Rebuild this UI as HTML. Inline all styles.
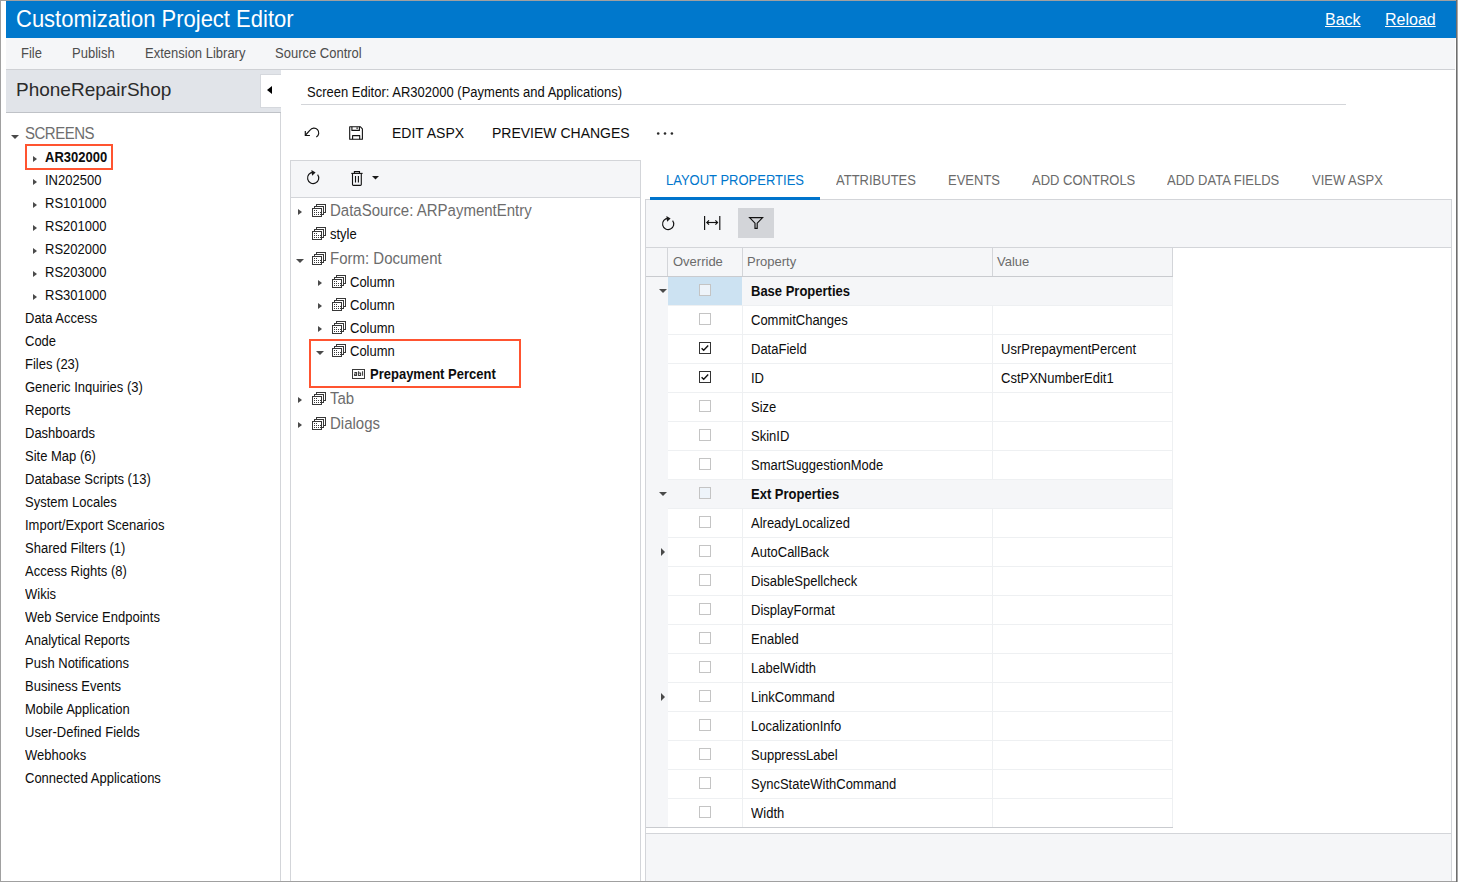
<!DOCTYPE html>
<html><head><meta charset="utf-8">
<style>
html,body{margin:0;padding:0;}
body{width:1458px;height:882px;position:relative;overflow:hidden;background:#fff;font-family:"Liberation Sans",sans-serif;color:#212121;}
.a{position:absolute;}
.t{position:absolute;white-space:nowrap;line-height:1;}
.f13{font-size:13px;transform:scaleY(1.075);transform-origin:0 11px;}
.f14{font-size:14px;}
.f15{font-size:15px;transform:scaleY(1.07);transform-origin:0 13px;}
.b{font-weight:bold;}
.tri-r{position:absolute;width:0;height:0;border-top:3.5px solid transparent;border-bottom:3.5px solid transparent;border-left:4.5px solid #4a4a4a;}
.tri-d{position:absolute;width:0;height:0;border-left:4px solid transparent;border-right:4px solid transparent;border-top:4px solid #4a4a4a;}
.redbox{position:absolute;border:2px solid #ff5430;box-sizing:border-box;}
.cb{position:absolute;width:12px;height:12px;box-sizing:border-box;border:1px solid #c4c4c4;background:#fff;}
</style></head>
<body>
<div class="a" style="left:6px;top:1px;width:1450px;height:37px;background:#0078cc;"></div>
<div class="t " style="left:16px;top:8px;color:#fff;font-size:22px;transform:scaleY(1.066);transform-origin:0 3px">Customization Project Editor</div>
<div class="t " style="left:1325px;top:12px;color:#fff;font-size:16px;text-decoration:underline">Back</div>
<div class="t " style="left:1385px;top:12px;color:#fff;font-size:16px;text-decoration:underline">Reload</div>
<div class="a" style="left:6px;top:38px;width:1449px;height:31px;background:#f5f6f8;"></div>
<div class="a" style="left:6px;top:69px;width:1449px;height:1px;background:#cfd1d5;"></div>
<div class="t f13" style="left:21px;top:47px;color:#4d4d4d;">File</div>
<div class="t f13" style="left:72px;top:47px;color:#4d4d4d;">Publish</div>
<div class="t f13" style="left:145px;top:47px;color:#4d4d4d;">Extension Library</div>
<div class="t f13" style="left:275px;top:47px;color:#4d4d4d;">Source Control</div>
<div class="a" style="left:6px;top:70px;width:275px;height:42px;background:#e1e4e9;"></div>
<div class="a" style="left:6px;top:112px;width:275px;height:1px;background:#bfc2c7;"></div>
<div class="a" style="left:280px;top:113px;width:1px;height:768px;background:#d3d5d9;"></div>
<div class="t " style="left:16px;top:80px;color:#2b2b2b;font-size:19px">PhoneRepairShop</div>
<div class="a" style="left:260px;top:74px;width:21px;height:34px;background:#fff;border-left:1px solid #d5d8dd;border-top:1px solid #d5d8dd;border-bottom:1px solid #d5d8dd;box-sizing:border-box"></div>
<div class="a" style="left:267px;top:86px;width:0;height:0;border-top:4px solid transparent;border-bottom:4px solid transparent;border-right:5px solid #000"></div>
<div class="tri-d" style="left:11px;top:135px"></div>
<div class="t f15" style="left:25px;top:126px;color:#6e6e6e;letter-spacing:-0.5px">SCREENS</div>
<div class="tri-r" style="left:33px;top:156px"></div>
<div class="t f13 b" style="left:45px;top:151px;color:#0d0d0d;">AR302000</div>
<div class="tri-r" style="left:33px;top:179px"></div>
<div class="t f13" style="left:45px;top:174px;color:#0d0d0d;">IN202500</div>
<div class="tri-r" style="left:33px;top:202px"></div>
<div class="t f13" style="left:45px;top:197px;color:#0d0d0d;">RS101000</div>
<div class="tri-r" style="left:33px;top:225px"></div>
<div class="t f13" style="left:45px;top:220px;color:#0d0d0d;">RS201000</div>
<div class="tri-r" style="left:33px;top:248px"></div>
<div class="t f13" style="left:45px;top:243px;color:#0d0d0d;">RS202000</div>
<div class="tri-r" style="left:33px;top:271px"></div>
<div class="t f13" style="left:45px;top:266px;color:#0d0d0d;">RS203000</div>
<div class="tri-r" style="left:33px;top:294px"></div>
<div class="t f13" style="left:45px;top:289px;color:#0d0d0d;">RS301000</div>
<div class="redbox" style="left:25px;top:144px;width:88px;height:26px"></div>
<div class="t f13" style="left:25px;top:312px;color:#0d0d0d;">Data Access</div>
<div class="t f13" style="left:25px;top:335px;color:#0d0d0d;">Code</div>
<div class="t f13" style="left:25px;top:358px;color:#0d0d0d;">Files (23)</div>
<div class="t f13" style="left:25px;top:381px;color:#0d0d0d;">Generic Inquiries (3)</div>
<div class="t f13" style="left:25px;top:404px;color:#0d0d0d;">Reports</div>
<div class="t f13" style="left:25px;top:427px;color:#0d0d0d;">Dashboards</div>
<div class="t f13" style="left:25px;top:450px;color:#0d0d0d;">Site Map (6)</div>
<div class="t f13" style="left:25px;top:473px;color:#0d0d0d;">Database Scripts (13)</div>
<div class="t f13" style="left:25px;top:496px;color:#0d0d0d;">System Locales</div>
<div class="t f13" style="left:25px;top:519px;color:#0d0d0d;">Import/Export Scenarios</div>
<div class="t f13" style="left:25px;top:542px;color:#0d0d0d;">Shared Filters (1)</div>
<div class="t f13" style="left:25px;top:565px;color:#0d0d0d;">Access Rights (8)</div>
<div class="t f13" style="left:25px;top:588px;color:#0d0d0d;">Wikis</div>
<div class="t f13" style="left:25px;top:611px;color:#0d0d0d;">Web Service Endpoints</div>
<div class="t f13" style="left:25px;top:634px;color:#0d0d0d;">Analytical Reports</div>
<div class="t f13" style="left:25px;top:657px;color:#0d0d0d;">Push Notifications</div>
<div class="t f13" style="left:25px;top:680px;color:#0d0d0d;">Business Events</div>
<div class="t f13" style="left:25px;top:703px;color:#0d0d0d;">Mobile Application</div>
<div class="t f13" style="left:25px;top:726px;color:#0d0d0d;">User-Defined Fields</div>
<div class="t f13" style="left:25px;top:749px;color:#0d0d0d;">Webhooks</div>
<div class="t f13" style="left:25px;top:772px;color:#0d0d0d;">Connected Applications</div>
<div class="t f13" style="left:307px;top:86px;color:#0d0d0d;">Screen Editor: AR302000 (Payments and Applications)</div>
<div class="a" style="left:301px;top:104px;width:1045px;height:1px;background:#d3d5d9;"></div>
<svg class="a" style="left:300px;top:120px" width="24" height="24" viewBox="0 0 24 24" fill="none" stroke="#111" stroke-width="1.15">
<path d="M16.3 17.1 A4.8 4.8 0 1 0 10.0 10.2 L5.6 15.0"/><path d="M5.3 11.0 V15.5 H9.9"/></svg>
<svg class="a" style="left:340px;top:120px" width="30" height="24" viewBox="0 0 30 24" fill="none" stroke="#111" stroke-width="1.1" stroke-linejoin="round">
<path d="M9.7 6.7 H20.2 L22.4 8.9 V19.3 H9.7 Z"/><path d="M11.9 6.7 V10.4 H19.4 V6.7"/><path d="M12.6 19.3 V15.6 H19.7 V19.3"/><path d="M17.1 7.3 V8.9" stroke-width="1.1"/></svg>
<div class="t f14" style="left:392px;top:126px;color:#0d0d0d;">EDIT ASPX</div>
<div class="t f14" style="left:492px;top:126px;color:#0d0d0d;">PREVIEW CHANGES</div>
<svg class="a" style="left:652px;top:120px" width="30" height="24" viewBox="0 0 30 24" fill="#2a2a2a"><circle cx="6.2" cy="13.5" r="1.3"/><circle cx="13.0" cy="13.5" r="1.3"/><circle cx="19.9" cy="13.5" r="1.3"/></svg>
<div class="a" style="left:290px;top:160px;width:351px;height:722px;box-sizing:border-box;border-left:1px solid #d3d5d9;border-top:1px solid #d3d5d9;border-right:1px solid #d3d5d9;background:#fff"></div>
<div class="a" style="left:291px;top:161px;width:349px;height:36px;background:#f5f6f8;"></div>
<div class="a" style="left:291px;top:197px;width:349px;height:1px;background:#d3d5d9;"></div>
<svg class="a" style="left:302.9px;top:168.0px" width="20" height="20" viewBox="0 0 20 20" fill="none" stroke="#111" stroke-width="1.15">
<path d="M14.6 6.6 A5.6 5.6 0 1 1 10.2 4.4"/><path d="M8.4 1.9 L12.6 4.5 L9.1 7.7 Z" fill="#1a1a1a" stroke="none"/></svg>
<svg class="a" style="left:345px;top:165px" width="40" height="24" viewBox="0 0 40 24" fill="none" stroke="#111" stroke-width="1.1">
<path d="M6.3 8.4 H17.6"/><path d="M9.4 8.2 V6.6 H14.5 V8.2"/><path d="M7.5 8.4 V19.5 Q7.5 20.4 8.4 20.4 H15.4 Q16.3 20.4 16.3 19.5 V8.4"/><path d="M10.5 11 V17.6 M13.4 11 V17.6"/>
<path d="M27 11 H34 L30.5 14.6 Z" fill="#1a1a1a" stroke="none"/></svg>
<div class="tri-r" style="left:298px;top:209px"></div>
<svg class="a" style="left:311px;top:203px" width="16" height="16" viewBox="0 0 16 16" fill="#fff" stroke="#383838" stroke-width="1" shape-rendering="crispEdges">
<rect x="5.5" y="1.5" width="9" height="8"/><rect x="3.5" y="3.5" width="9" height="8"/><rect x="1.5" y="5.5" width="9" height="8"/>
<g fill="#383838" stroke="none"><rect x="3" y="7" width="1" height="1"/><rect x="5" y="7" width="1" height="1"/>
<rect x="3" y="9" width="1" height="1"/><rect x="5" y="9" width="1" height="1"/><rect x="7" y="9" width="1" height="1"/><rect x="9" y="9" width="1" height="1"/>
<rect x="3" y="11" width="1" height="1"/><rect x="5" y="11" width="1" height="1"/><rect x="7" y="11" width="1" height="1"/><rect x="9" y="11" width="1" height="1"/></g></svg>
<div class="t f15" style="left:330px;top:203px;color:#6c6c6c;">DataSource: ARPaymentEntry</div>
<svg class="a" style="left:311px;top:226px" width="16" height="16" viewBox="0 0 16 16" fill="#fff" stroke="#383838" stroke-width="1" shape-rendering="crispEdges">
<rect x="5.5" y="1.5" width="9" height="8"/><rect x="3.5" y="3.5" width="9" height="8"/><rect x="1.5" y="5.5" width="9" height="8"/>
<g fill="#383838" stroke="none"><rect x="3" y="7" width="1" height="1"/><rect x="5" y="7" width="1" height="1"/>
<rect x="3" y="9" width="1" height="1"/><rect x="5" y="9" width="1" height="1"/><rect x="7" y="9" width="1" height="1"/><rect x="9" y="9" width="1" height="1"/>
<rect x="3" y="11" width="1" height="1"/><rect x="5" y="11" width="1" height="1"/><rect x="7" y="11" width="1" height="1"/><rect x="9" y="11" width="1" height="1"/></g></svg>
<div class="t f13" style="left:330px;top:228px;color:#0d0d0d;">style</div>
<div class="tri-d" style="left:296px;top:259px"></div>
<svg class="a" style="left:311px;top:251px" width="16" height="16" viewBox="0 0 16 16" fill="#fff" stroke="#383838" stroke-width="1" shape-rendering="crispEdges">
<rect x="5.5" y="1.5" width="9" height="8"/><rect x="3.5" y="3.5" width="9" height="8"/><rect x="1.5" y="5.5" width="9" height="8"/>
<g fill="#383838" stroke="none"><rect x="3" y="7" width="1" height="1"/><rect x="5" y="7" width="1" height="1"/>
<rect x="3" y="9" width="1" height="1"/><rect x="5" y="9" width="1" height="1"/><rect x="7" y="9" width="1" height="1"/><rect x="9" y="9" width="1" height="1"/>
<rect x="3" y="11" width="1" height="1"/><rect x="5" y="11" width="1" height="1"/><rect x="7" y="11" width="1" height="1"/><rect x="9" y="11" width="1" height="1"/></g></svg>
<div class="t f15" style="left:330px;top:251px;color:#6c6c6c;">Form: Document</div>
<div class="tri-r" style="left:318px;top:280px"></div>
<svg class="a" style="left:331px;top:274px" width="16" height="16" viewBox="0 0 16 16" fill="#fff" stroke="#383838" stroke-width="1" shape-rendering="crispEdges">
<rect x="5.5" y="1.5" width="9" height="8"/><rect x="3.5" y="3.5" width="9" height="8"/><rect x="1.5" y="5.5" width="9" height="8"/>
<g fill="#383838" stroke="none"><rect x="3" y="7" width="1" height="1"/><rect x="5" y="7" width="1" height="1"/>
<rect x="3" y="9" width="1" height="1"/><rect x="5" y="9" width="1" height="1"/><rect x="7" y="9" width="1" height="1"/><rect x="9" y="9" width="1" height="1"/>
<rect x="3" y="11" width="1" height="1"/><rect x="5" y="11" width="1" height="1"/><rect x="7" y="11" width="1" height="1"/><rect x="9" y="11" width="1" height="1"/></g></svg>
<div class="t f13" style="left:350px;top:276px;color:#0d0d0d;">Column</div>
<div class="tri-r" style="left:318px;top:303px"></div>
<svg class="a" style="left:331px;top:297px" width="16" height="16" viewBox="0 0 16 16" fill="#fff" stroke="#383838" stroke-width="1" shape-rendering="crispEdges">
<rect x="5.5" y="1.5" width="9" height="8"/><rect x="3.5" y="3.5" width="9" height="8"/><rect x="1.5" y="5.5" width="9" height="8"/>
<g fill="#383838" stroke="none"><rect x="3" y="7" width="1" height="1"/><rect x="5" y="7" width="1" height="1"/>
<rect x="3" y="9" width="1" height="1"/><rect x="5" y="9" width="1" height="1"/><rect x="7" y="9" width="1" height="1"/><rect x="9" y="9" width="1" height="1"/>
<rect x="3" y="11" width="1" height="1"/><rect x="5" y="11" width="1" height="1"/><rect x="7" y="11" width="1" height="1"/><rect x="9" y="11" width="1" height="1"/></g></svg>
<div class="t f13" style="left:350px;top:299px;color:#0d0d0d;">Column</div>
<div class="tri-r" style="left:318px;top:326px"></div>
<svg class="a" style="left:331px;top:320px" width="16" height="16" viewBox="0 0 16 16" fill="#fff" stroke="#383838" stroke-width="1" shape-rendering="crispEdges">
<rect x="5.5" y="1.5" width="9" height="8"/><rect x="3.5" y="3.5" width="9" height="8"/><rect x="1.5" y="5.5" width="9" height="8"/>
<g fill="#383838" stroke="none"><rect x="3" y="7" width="1" height="1"/><rect x="5" y="7" width="1" height="1"/>
<rect x="3" y="9" width="1" height="1"/><rect x="5" y="9" width="1" height="1"/><rect x="7" y="9" width="1" height="1"/><rect x="9" y="9" width="1" height="1"/>
<rect x="3" y="11" width="1" height="1"/><rect x="5" y="11" width="1" height="1"/><rect x="7" y="11" width="1" height="1"/><rect x="9" y="11" width="1" height="1"/></g></svg>
<div class="t f13" style="left:350px;top:322px;color:#0d0d0d;">Column</div>
<div class="tri-d" style="left:316px;top:351px"></div>
<svg class="a" style="left:331px;top:343px" width="16" height="16" viewBox="0 0 16 16" fill="#fff" stroke="#383838" stroke-width="1" shape-rendering="crispEdges">
<rect x="5.5" y="1.5" width="9" height="8"/><rect x="3.5" y="3.5" width="9" height="8"/><rect x="1.5" y="5.5" width="9" height="8"/>
<g fill="#383838" stroke="none"><rect x="3" y="7" width="1" height="1"/><rect x="5" y="7" width="1" height="1"/>
<rect x="3" y="9" width="1" height="1"/><rect x="5" y="9" width="1" height="1"/><rect x="7" y="9" width="1" height="1"/><rect x="9" y="9" width="1" height="1"/>
<rect x="3" y="11" width="1" height="1"/><rect x="5" y="11" width="1" height="1"/><rect x="7" y="11" width="1" height="1"/><rect x="9" y="11" width="1" height="1"/></g></svg>
<div class="t f13" style="left:350px;top:345px;color:#0d0d0d;">Column</div>
<div class="tri-r" style="left:298px;top:397px"></div>
<svg class="a" style="left:311px;top:391px" width="16" height="16" viewBox="0 0 16 16" fill="#fff" stroke="#383838" stroke-width="1" shape-rendering="crispEdges">
<rect x="5.5" y="1.5" width="9" height="8"/><rect x="3.5" y="3.5" width="9" height="8"/><rect x="1.5" y="5.5" width="9" height="8"/>
<g fill="#383838" stroke="none"><rect x="3" y="7" width="1" height="1"/><rect x="5" y="7" width="1" height="1"/>
<rect x="3" y="9" width="1" height="1"/><rect x="5" y="9" width="1" height="1"/><rect x="7" y="9" width="1" height="1"/><rect x="9" y="9" width="1" height="1"/>
<rect x="3" y="11" width="1" height="1"/><rect x="5" y="11" width="1" height="1"/><rect x="7" y="11" width="1" height="1"/><rect x="9" y="11" width="1" height="1"/></g></svg>
<div class="t f15" style="left:330px;top:391px;color:#6c6c6c;">Tab</div>
<div class="tri-r" style="left:298px;top:422px"></div>
<svg class="a" style="left:311px;top:416px" width="16" height="16" viewBox="0 0 16 16" fill="#fff" stroke="#383838" stroke-width="1" shape-rendering="crispEdges">
<rect x="5.5" y="1.5" width="9" height="8"/><rect x="3.5" y="3.5" width="9" height="8"/><rect x="1.5" y="5.5" width="9" height="8"/>
<g fill="#383838" stroke="none"><rect x="3" y="7" width="1" height="1"/><rect x="5" y="7" width="1" height="1"/>
<rect x="3" y="9" width="1" height="1"/><rect x="5" y="9" width="1" height="1"/><rect x="7" y="9" width="1" height="1"/><rect x="9" y="9" width="1" height="1"/>
<rect x="3" y="11" width="1" height="1"/><rect x="5" y="11" width="1" height="1"/><rect x="7" y="11" width="1" height="1"/><rect x="9" y="11" width="1" height="1"/></g></svg>
<div class="t f15" style="left:330px;top:416px;color:#6c6c6c;">Dialogs</div>
<svg class="a" style="left:352px;top:369px" width="13" height="10" viewBox="0 0 13 10"><rect x="0.5" y="0.5" width="12" height="9" fill="#fff" stroke="#3a3a3a" stroke-width="1"/>
<path d="M2.4 3.5 H4.6 V6.5 H2.6 V5 H4.6 M6.6 2.3 V6.5 H8.6 V4 H6.6 M10.6 2.3 V6.8" fill="none" stroke="#3a3a3a" stroke-width="1.05"/></svg>
<div class="t f13 b" style="left:370px;top:368px;color:#0d0d0d;">Prepayment Percent</div>
<div class="redbox" style="left:309px;top:339px;width:212px;height:49px"></div>
<div class="t f13" style="left:666px;top:174px;color:#0076cc;">LAYOUT PROPERTIES</div>
<div class="t f13" style="left:836px;top:174px;color:#6b6b6b;">ATTRIBUTES</div>
<div class="t f13" style="left:948px;top:174px;color:#6b6b6b;">EVENTS</div>
<div class="t f13" style="left:1032px;top:174px;color:#6b6b6b;">ADD CONTROLS</div>
<div class="t f13" style="left:1167px;top:174px;color:#6b6b6b;">ADD DATA FIELDS</div>
<div class="t f13" style="left:1312px;top:174px;color:#6b6b6b;">VIEW ASPX</div>
<div class="a" style="left:645px;top:199px;width:807px;height:683px;box-sizing:border-box;border-left:1px solid #d3d5d9;border-top:1px solid #d3d5d9;border-right:1px solid #d3d5d9;background:#f5f6f8"></div>
<div class="a" style="left:650px;top:197px;width:170px;height:3px;background:#0074cc;"></div>
<svg class="a" style="left:658.3px;top:214.0px" width="20" height="20" viewBox="0 0 20 20" fill="none" stroke="#111" stroke-width="1.15">
<path d="M14.6 6.6 A5.6 5.6 0 1 1 10.2 4.4"/><path d="M8.4 1.9 L12.6 4.5 L9.1 7.7 Z" fill="#1a1a1a" stroke="none"/></svg>
<svg class="a" style="left:700px;top:212px" width="24" height="22" viewBox="0 0 24 22" fill="none" stroke="#111" stroke-width="1.15">
<path d="M4.6 4 V18 M19.8 4 V18"/><path d="M6.8 10.5 H17.6"/><path d="M9 8.3 L6.8 10.5 L9 12.7 M15.4 8.3 L17.6 10.5 L15.4 12.7"/></svg>
<div class="a" style="left:738px;top:208px;width:36px;height:30px;background:#d3d5d9;"></div>
<svg class="a" style="left:744px;top:212px" width="24" height="22" viewBox="0 0 24 22" fill="none" stroke="#111" stroke-width="1.15" stroke-linejoin="miter">
<path d="M5.6 5.6 H18.6 L13.2 11.2 V16.4 H11 V11.2 Z"/></svg>
<div class="a" style="left:646px;top:247px;width:805px;height:1px;background:#d3d5d9;"></div>
<div class="a" style="left:646px;top:248px;width:805px;height:585px;background:#fff;"></div>
<div class="a" style="left:646px;top:248px;width:527px;height:28px;background:#f5f6f8;"></div>
<div class="a" style="left:646px;top:276px;width:527px;height:1px;background:#c9cbcf;"></div>
<div class="a" style="left:667px;top:248px;width:1px;height:28px;background:#d3d5d9;"></div>
<div class="a" style="left:742px;top:248px;width:1px;height:28px;background:#d3d5d9;"></div>
<div class="a" style="left:992px;top:248px;width:1px;height:28px;background:#d3d5d9;"></div>
<div class="a" style="left:1172px;top:248px;width:1px;height:28px;background:#d3d5d9;"></div>
<div class="t f13" style="left:673px;top:255px;color:#6b6b6b;transform:none">Override</div>
<div class="t f13" style="left:747px;top:255px;color:#6b6b6b;transform:none">Property</div>
<div class="t f13" style="left:997px;top:255px;color:#6b6b6b;transform:none">Value</div>
<div class="a" style="left:646px;top:277px;width:22px;height:550px;background:#f5f6f8;"></div>
<div class="a" style="left:668px;top:277px;width:504px;height:28px;background:#f5f6f8;"></div>
<div class="a" style="left:668px;top:277px;width:74px;height:28px;background:#cce2f2;"></div>
<div class="tri-d" style="left:659px;top:289px"></div>
<div class="a" style="left:668px;top:305px;width:504px;height:1px;background:#eef0f2;"></div>
<div class="cb" style="left:699px;top:284px;background:#eef4fa"></div>
<div class="t f13 b" style="left:751px;top:285px;color:#0d0d0d;">Base Properties</div>
<div class="a" style="left:742px;top:306px;width:1px;height:28px;background:#eef0f2;"></div>
<div class="a" style="left:992px;top:306px;width:1px;height:28px;background:#eef0f2;"></div>
<div class="a" style="left:668px;top:334px;width:504px;height:1px;background:#eef0f2;"></div>
<div class="cb" style="left:699px;top:313px;background:#fff"></div>
<div class="t f13" style="left:751px;top:314px;color:#0d0d0d;">CommitChanges</div>
<div class="a" style="left:742px;top:335px;width:1px;height:28px;background:#eef0f2;"></div>
<div class="a" style="left:992px;top:335px;width:1px;height:28px;background:#eef0f2;"></div>
<div class="a" style="left:668px;top:363px;width:504px;height:1px;background:#eef0f2;"></div>
<svg class="a" style="left:699px;top:342px" width="12" height="12" viewBox="0 0 12 12"><rect x="0.5" y="0.5" width="11" height="11" fill="#fff" stroke="#333" stroke-width="1"/><path d="M2.6 6.2 L4.7 8.2 L9.2 3.6" fill="none" stroke="#111" stroke-width="1.4"/></svg>
<div class="t f13" style="left:751px;top:343px;color:#0d0d0d;">DataField</div>
<div class="t f13" style="left:1001px;top:343px;color:#0d0d0d;">UsrPrepaymentPercent</div>
<div class="a" style="left:742px;top:364px;width:1px;height:28px;background:#eef0f2;"></div>
<div class="a" style="left:992px;top:364px;width:1px;height:28px;background:#eef0f2;"></div>
<div class="a" style="left:668px;top:392px;width:504px;height:1px;background:#eef0f2;"></div>
<svg class="a" style="left:699px;top:371px" width="12" height="12" viewBox="0 0 12 12"><rect x="0.5" y="0.5" width="11" height="11" fill="#fff" stroke="#333" stroke-width="1"/><path d="M2.6 6.2 L4.7 8.2 L9.2 3.6" fill="none" stroke="#111" stroke-width="1.4"/></svg>
<div class="t f13" style="left:751px;top:372px;color:#0d0d0d;">ID</div>
<div class="t f13" style="left:1001px;top:372px;color:#0d0d0d;">CstPXNumberEdit1</div>
<div class="a" style="left:742px;top:393px;width:1px;height:28px;background:#eef0f2;"></div>
<div class="a" style="left:992px;top:393px;width:1px;height:28px;background:#eef0f2;"></div>
<div class="a" style="left:668px;top:421px;width:504px;height:1px;background:#eef0f2;"></div>
<div class="cb" style="left:699px;top:400px;background:#fff"></div>
<div class="t f13" style="left:751px;top:401px;color:#0d0d0d;">Size</div>
<div class="a" style="left:742px;top:422px;width:1px;height:28px;background:#eef0f2;"></div>
<div class="a" style="left:992px;top:422px;width:1px;height:28px;background:#eef0f2;"></div>
<div class="a" style="left:668px;top:450px;width:504px;height:1px;background:#eef0f2;"></div>
<div class="cb" style="left:699px;top:429px;background:#fff"></div>
<div class="t f13" style="left:751px;top:430px;color:#0d0d0d;">SkinID</div>
<div class="a" style="left:742px;top:451px;width:1px;height:28px;background:#eef0f2;"></div>
<div class="a" style="left:992px;top:451px;width:1px;height:28px;background:#eef0f2;"></div>
<div class="a" style="left:668px;top:479px;width:504px;height:1px;background:#eef0f2;"></div>
<div class="cb" style="left:699px;top:458px;background:#fff"></div>
<div class="t f13" style="left:751px;top:459px;color:#0d0d0d;">SmartSuggestionMode</div>
<div class="a" style="left:668px;top:480px;width:504px;height:28px;background:#f5f6f8;"></div>
<div class="tri-d" style="left:659px;top:492px"></div>
<div class="a" style="left:668px;top:508px;width:504px;height:1px;background:#eef0f2;"></div>
<div class="cb" style="left:699px;top:487px;background:#eef4fa"></div>
<div class="t f13 b" style="left:751px;top:488px;color:#0d0d0d;">Ext Properties</div>
<div class="a" style="left:742px;top:509px;width:1px;height:28px;background:#eef0f2;"></div>
<div class="a" style="left:992px;top:509px;width:1px;height:28px;background:#eef0f2;"></div>
<div class="a" style="left:668px;top:537px;width:504px;height:1px;background:#eef0f2;"></div>
<div class="cb" style="left:699px;top:516px;background:#fff"></div>
<div class="t f13" style="left:751px;top:517px;color:#0d0d0d;">AlreadyLocalized</div>
<div class="a" style="left:742px;top:538px;width:1px;height:28px;background:#eef0f2;"></div>
<div class="a" style="left:992px;top:538px;width:1px;height:28px;background:#eef0f2;"></div>
<div class="a" style="left:668px;top:566px;width:504px;height:1px;background:#eef0f2;"></div>
<div class="tri-r" style="left:661px;top:548px;border-top-width:4px;border-bottom-width:4px"></div>
<div class="cb" style="left:699px;top:545px;background:#fff"></div>
<div class="t f13" style="left:751px;top:546px;color:#0d0d0d;">AutoCallBack</div>
<div class="a" style="left:742px;top:567px;width:1px;height:28px;background:#eef0f2;"></div>
<div class="a" style="left:992px;top:567px;width:1px;height:28px;background:#eef0f2;"></div>
<div class="a" style="left:668px;top:595px;width:504px;height:1px;background:#eef0f2;"></div>
<div class="cb" style="left:699px;top:574px;background:#fff"></div>
<div class="t f13" style="left:751px;top:575px;color:#0d0d0d;">DisableSpellcheck</div>
<div class="a" style="left:742px;top:596px;width:1px;height:28px;background:#eef0f2;"></div>
<div class="a" style="left:992px;top:596px;width:1px;height:28px;background:#eef0f2;"></div>
<div class="a" style="left:668px;top:624px;width:504px;height:1px;background:#eef0f2;"></div>
<div class="cb" style="left:699px;top:603px;background:#fff"></div>
<div class="t f13" style="left:751px;top:604px;color:#0d0d0d;">DisplayFormat</div>
<div class="a" style="left:742px;top:625px;width:1px;height:28px;background:#eef0f2;"></div>
<div class="a" style="left:992px;top:625px;width:1px;height:28px;background:#eef0f2;"></div>
<div class="a" style="left:668px;top:653px;width:504px;height:1px;background:#eef0f2;"></div>
<div class="cb" style="left:699px;top:632px;background:#fff"></div>
<div class="t f13" style="left:751px;top:633px;color:#0d0d0d;">Enabled</div>
<div class="a" style="left:742px;top:654px;width:1px;height:28px;background:#eef0f2;"></div>
<div class="a" style="left:992px;top:654px;width:1px;height:28px;background:#eef0f2;"></div>
<div class="a" style="left:668px;top:682px;width:504px;height:1px;background:#eef0f2;"></div>
<div class="cb" style="left:699px;top:661px;background:#fff"></div>
<div class="t f13" style="left:751px;top:662px;color:#0d0d0d;">LabelWidth</div>
<div class="a" style="left:742px;top:683px;width:1px;height:28px;background:#eef0f2;"></div>
<div class="a" style="left:992px;top:683px;width:1px;height:28px;background:#eef0f2;"></div>
<div class="a" style="left:668px;top:711px;width:504px;height:1px;background:#eef0f2;"></div>
<div class="tri-r" style="left:661px;top:693px;border-top-width:4px;border-bottom-width:4px"></div>
<div class="cb" style="left:699px;top:690px;background:#fff"></div>
<div class="t f13" style="left:751px;top:691px;color:#0d0d0d;">LinkCommand</div>
<div class="a" style="left:742px;top:712px;width:1px;height:28px;background:#eef0f2;"></div>
<div class="a" style="left:992px;top:712px;width:1px;height:28px;background:#eef0f2;"></div>
<div class="a" style="left:668px;top:740px;width:504px;height:1px;background:#eef0f2;"></div>
<div class="cb" style="left:699px;top:719px;background:#fff"></div>
<div class="t f13" style="left:751px;top:720px;color:#0d0d0d;">LocalizationInfo</div>
<div class="a" style="left:742px;top:741px;width:1px;height:28px;background:#eef0f2;"></div>
<div class="a" style="left:992px;top:741px;width:1px;height:28px;background:#eef0f2;"></div>
<div class="a" style="left:668px;top:769px;width:504px;height:1px;background:#eef0f2;"></div>
<div class="cb" style="left:699px;top:748px;background:#fff"></div>
<div class="t f13" style="left:751px;top:749px;color:#0d0d0d;">SuppressLabel</div>
<div class="a" style="left:742px;top:770px;width:1px;height:28px;background:#eef0f2;"></div>
<div class="a" style="left:992px;top:770px;width:1px;height:28px;background:#eef0f2;"></div>
<div class="a" style="left:668px;top:798px;width:504px;height:1px;background:#eef0f2;"></div>
<div class="cb" style="left:699px;top:777px;background:#fff"></div>
<div class="t f13" style="left:751px;top:778px;color:#0d0d0d;">SyncStateWithCommand</div>
<div class="a" style="left:742px;top:799px;width:1px;height:28px;background:#eef0f2;"></div>
<div class="a" style="left:992px;top:799px;width:1px;height:28px;background:#eef0f2;"></div>
<div class="a" style="left:668px;top:827px;width:504px;height:1px;background:#eef0f2;"></div>
<div class="cb" style="left:699px;top:806px;background:#fff"></div>
<div class="t f13" style="left:751px;top:807px;color:#0d0d0d;">Width</div>
<div class="a" style="left:1172px;top:277px;width:1px;height:550px;background:#eef0f2;"></div>
<div class="a" style="left:646px;top:827px;width:527px;height:1px;background:#c9cbcf;"></div>
<div class="a" style="left:646px;top:833px;width:805px;height:1px;background:#d3d5d9;"></div>
<div class="a" style="left:0px;top:0px;width:1458px;height:1px;background:#a0a0a0;"></div>
<div class="a" style="left:0px;top:881px;width:1458px;height:1px;background:#a0a0a0;"></div>
<div class="a" style="left:0px;top:0px;width:1px;height:882px;background:#a0a0a0;"></div>
<div class="a" style="left:1456px;top:0px;width:1px;height:882px;background:#6e6e6e;"></div>
<div class="a" style="left:1457px;top:0px;width:1px;height:882px;background:#a8a8a8;"></div>
</body></html>
